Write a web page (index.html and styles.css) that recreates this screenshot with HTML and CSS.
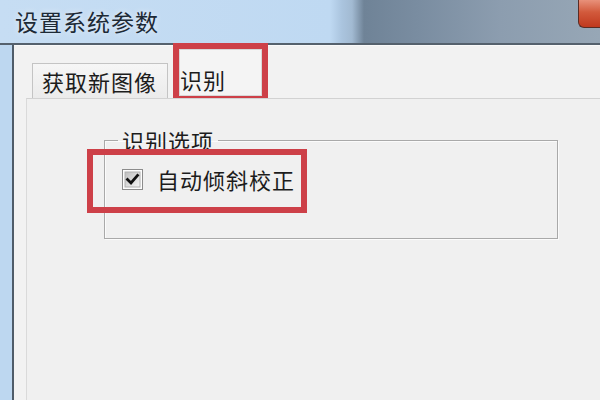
FILE: index.html
```html
<!DOCTYPE html>
<html lang="zh-CN">
<head>
<meta charset="utf-8">
<title>设置系统参数</title>
<link rel="stylesheet" href="styles.css">
</head>
<body>
<div class="window">
  <div class="titlebar">
    <span class="title">设置系统参数</span>
    <span class="close"></span>
  </div>
  <div class="body-row">
    <div class="frame-left"></div>
    <div class="client">
      <div class="tabs">
        <div class="tab">获取新图像</div>
        <div class="tab tab-active">识别</div>
      </div>
      <div class="panel">
        <fieldset class="group">
          <legend class="group-legend">识别选项</legend>
          <label class="option">
            <span class="checkbox">
              <svg width="21" height="21" viewBox="0 0 21 21">
                <defs>
                  <linearGradient id="cbg" x1="0" y1="0" x2="1" y2="1">
                    <stop offset="0" stop-color="#bdbdbd"/>
                    <stop offset="1" stop-color="#f6f6f6"/>
                  </linearGradient>
                </defs>
                <rect x="0.5" y="0.5" width="20" height="20" fill="#fdfdfd" stroke="#8c8c8c"/>
                <rect x="3" y="3" width="15" height="15" fill="url(#cbg)" stroke="#b0b0b0" stroke-width="1"/>
                <path d="M5.5 10.5 L9 14 L15.5 6.5" fill="none" stroke="#111" stroke-width="2.8" stroke-linecap="square"/>
              </svg>
            </span>
            <span class="option-text">自动倾斜校正</span>
          </label>
        </fieldset>
      </div>
    </div>
  </div>
</div>
</body>
</html>
```
FILE: styles.css
```css
html, body {
  margin: 0;
  padding: 0;
}
body {
  width: 600px;
  height: 400px;
  overflow: hidden;
  background: #f0f0f0;
  font-family: "Noto Sans CJK SC", "Noto Sans", sans-serif;
  color: #1c1c1c;
}
.window {
  display: flex;
  flex-direction: column;
  height: 400px;
}
.titlebar {
  display: flex;
  align-items: center;
  height: 43px;
  padding-left: 15px;
  border-bottom: 2px solid #55616d;
  background: linear-gradient(to right,
    #c6ddf3 0px, #bfd9f2 330px, #aac4de 342px, #a2bad2 352px,
    #6f8397 364px, #7a8da1 420px, #8c9daf 500px, #97a7b6 600px);
}
.title {
  font-size: 23px;
  letter-spacing: 1px;
  line-height: 1;
  color: #1d2a36;
  text-shadow: 0 0 6px rgba(255,255,255,0.7);
}
.close {
  margin-left: auto;
  align-self: flex-start;
  width: 21px;
  height: 27px;
  border: 1px solid #5a2c24;
  border-top: none;
  border-right: none;
  border-bottom-left-radius: 6px;
  background: linear-gradient(to bottom, #e8917a 0%, #d25a3c 45%, #c0391e 100%);
}
.body-row {
  display: flex;
  flex: 1;
}
.frame-left {
  width: 12px;
  background: #bdd7f0;
  border-right: 2px solid #4f5c69;
}
.client {
  flex: 1;
  display: flex;
  flex-direction: column;
  border-top: 1px solid #fafafa;
  background: #f2f2f2;
}
.tabs {
  display: flex;
  align-items: flex-end;
  padding-left: 18px;
  height: 52px;
}
.tab {
  height: 35px;
  box-sizing: border-box;
  padding-left: 9px;
  width: 136px;
  display: flex;
  align-items: center;
  font-size: 22px;
  letter-spacing: 1px;
  line-height: 1;
  border: 1px solid #c4c4c4;
  border-bottom: none;
  background: linear-gradient(to bottom, #f6f6f6, #ebebeb);
}
.tab-active {
  width: 83px;
  height: 47px;
  margin-left: 11px;
  margin-bottom: 2px;
  padding-left: 0;
  align-items: flex-start;
  padding-top: 18px;
  border: 1px solid #d8d8d8;
  background: #f4f4f4;
  outline: 6px solid #cd4048;
}
.panel {
  flex: 1;
  margin-left: 12px;
  border-top: 1px solid #d2d2d2;
  border-left: 1px solid #dadada;
  background: #f0f0f0;
  padding-left: 77px;
  padding-top: 30px;
}
.group {
  width: 454px;
  margin: 0;
  padding: 0 0 30px 0;
  border: 1px solid #a9a9a9;
  box-shadow: inset 1px 1px 0 #fbfbfb, 1px 1px 0 #fbfbfb;
  box-sizing: border-box;
  min-height: 110px;
}
.group-legend {
  margin-left: 13px;
  padding: 0 4px;
  font-size: 22px;
  letter-spacing: 1px;
  line-height: 22px;
}
.option {
  display: flex;
  align-items: center;
  width: 208px;
  height: 52px;
  box-sizing: border-box;
  margin-top: 4px;
  margin-left: -12px;
  padding-left: 29px;
  padding-bottom: 4px;
  outline: 6px solid #cd4048;
}
.checkbox {
  display: flex;
  width: 21px;
  height: 21px;
  margin-right: 14px;
}
.option-text {
  font-size: 22px;
  letter-spacing: 1px;
  line-height: 1;
}
```
